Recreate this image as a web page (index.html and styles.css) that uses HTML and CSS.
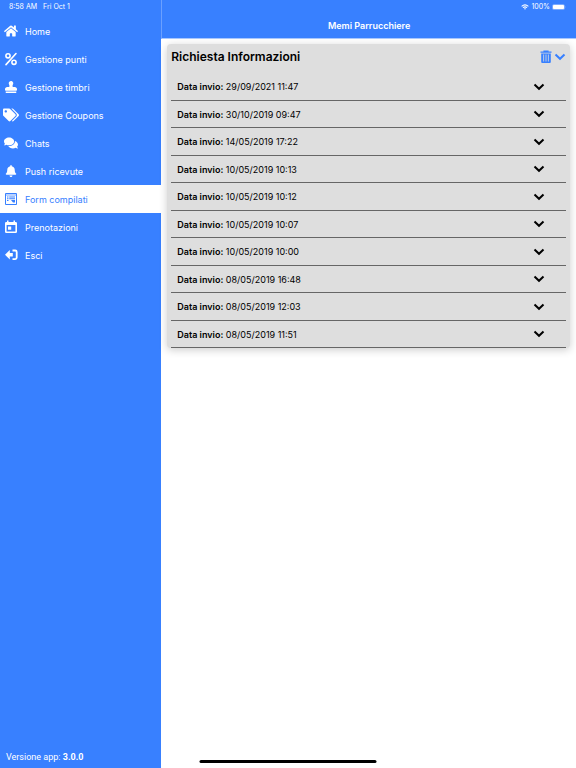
FILE: index.html
```html
<!DOCTYPE html>
<html lang="it">
<head>
<meta charset="utf-8">
<meta name="viewport" content="width=device-width, initial-scale=1">
<title>Memi Parrucchiere</title>
<link rel="stylesheet" href="styles.css">
</head>
<body>
<svg class="defs" aria-hidden="true">
  <symbol id="chevron" viewBox="0 0 12 8"><path d="M1.500 1.500 6 5.800l4.500-4.300" fill="none" stroke="currentColor" stroke-width="2"/></symbol>
</svg>
<div class="app">
  <aside class="sidebar">
    <div class="status"><span>8:58 AM</span><span>Fri Oct 1</span></div>
    <nav class="menu">
      <a class="item" href="#home"><svg class="icon" viewBox="0 0 576 512"><path d="M280.370 148.260L96 300.110V464a16 16 0 0 0 16 16l112.060-.29a16 16 0 0 0 15.920-16V368a16 16 0 0 1 16-16h64a16 16 0 0 1 16 16v95.640a16 16 0 0 0 16 16.050L464 480a16 16 0 0 0 16-16V300L295.670 148.260a12.190 12.190 0 0 0-15.300 0zM571.600 251.470L488 182.560V44.050a12 12 0 0 0-12-12h-56a12 12 0 0 0-12 12v72.610L318.470 43a48 48 0 0 0-61 0L4.340 251.470a12 12 0 0 0-1.600 16.900l25.500 31A12 12 0 0 0 45.150 301l235.220-193.740a12.190 12.190 0 0 1 15.300 0L530.900 301a12 12 0 0 0 16.900-1.600l25.500-31a12 12 0 0 0-1.700-16.930z"/></svg>Home</a>
      <a class="item" href="#punti"><svg class="icon" viewBox="0 0 14 14"><g fill="none" stroke="currentColor" stroke-width="1.600"><circle cx="4" cy="3.800" r="2.100"/><circle cx="10" cy="10.300" r="2.100"/><path d="M12 1.500 2 12.600" stroke-linecap="round"/></g></svg>Gestione punti</a>
      <a class="item" href="#timbri"><svg class="icon small" viewBox="0 0 512 512"><path d="M32 512h448v-64H32v64zm384-256h-66.560c-16.260 0-29.440-13.180-29.440-29.440v-9.460c0-27.370 8.880-53.410 21.460-77.720 9.110-17.610 12.900-38.390 9.050-60.420-6.770-38.780-38.470-70.700-77.260-77.450C212.620-9.040 160 37.330 160 96c0 14.160 3.120 27.540 8.690 39.580C182.020 164.430 192 194.700 192 226.490v.07c0 16.260-13.180 29.440-29.440 29.440H96c-53.020 0-96 42.980-96 96v32c0 17.670 14.330 32 32 32h448c17.670 0 32-14.330 32-32v-32c0-53.020-42.980-96-96-96z"/></svg>Gestione timbri</a>
      <a class="item" href="#coupons"><svg class="icon wide" viewBox="0 0 640 512"><path d="M497.941 225.941L286.059 14.059A48 48 0 0 0 252.118 0H48C21.490 0 0 21.490 0 48v204.118a48 48 0 0 0 14.059 33.941l211.882 211.882c18.744 18.745 49.136 18.746 67.882 0l204.118-204.118c18.745-18.745 18.745-49.137 0-67.882zM112 160c-26.510 0-48-21.490-48-48s21.490-48 48-48 48 21.490 48 48-21.490 48-48 48zm513.941 133.823L421.823 497.941c-18.745 18.745-49.137 18.745-67.882 0l-.36-.36L527.640 323.522c16.999-16.999 26.360-39.600 26.360-63.640s-9.362-46.641-26.360-63.640L331.397 0h48.721a48 48 0 0 1 33.941 14.059l211.882 211.882c18.745 18.745 18.745 49.137 0 67.882z"/></svg>Gestione Coupons</a>
      <a class="item" href="#chats"><svg class="icon" viewBox="0 0 576 512"><path d="M416 192c0-88.400-93.100-160-208-160S0 103.600 0 192c0 34.300 14.100 65.900 38 92-13.400 30.200-35.500 54.200-35.800 54.500-2.200 2.300-2.800 5.700-1.500 8.700S4.800 352 8 352c36.600 0 66.900-12.300 88.700-25 32.200 15.700 70.300 25 111.300 25 114.900 0 208-71.600 208-160zm122 220c23.900-26 38-57.700 38-92 0-66.900-53.500-124.200-129.300-148.100.9 6.600 1.300 13.300 1.300 20.100 0 105.900-107.700 192-240 192-10.800 0-21.300-.8-31.700-1.900C207.800 439.600 281.800 480 368 480c41 0 79.100-9.200 111.300-25 21.800 12.700 52.100 25 88.700 25 3.200 0 6.100-1.900 7.300-4.800 1.300-2.900.7-6.300-1.500-8.700-.3-.3-22.400-24.200-35.800-54.500z"/></svg>Chats</a>
      <a class="item" href="#push"><svg class="icon small" viewBox="0 0 448 512"><path d="M224 512c35.320 0 63.970-28.650 63.970-64H160.030c0 35.350 28.650 64 63.970 64zm215.390-149.710c-19.320-20.760-55.470-51.990-55.470-154.290 0-77.700-54.480-139.900-127.940-155.160V32c0-17.670-14.320-32-31.980-32s-31.980 14.330-31.980 32v20.840C118.560 68.100 64.080 130.300 64.080 208c0 102.300-36.150 133.530-55.470 154.290-6 6.450-8.660 14.160-8.610 21.710.11 16.400 12.980 32 32.100 32h383.800c19.120 0 32-15.600 32.100-32 .05-7.550-2.610-15.270-8.610-21.710z"/></svg>Push ricevute</a>
      <a class="item active" href="#form" aria-current="page"><svg class="icon" viewBox="0 0 14 14"><path d="M1.500 1.500h11v11h-11z" fill="none" stroke="currentColor"/><path d="M2 3h10" fill="none" stroke="currentColor" stroke-width=".7"/><path d="M3 4.500h1.500v1H3zM5.200 4.500H11v1H5.200zM3 6.300h1.500v1H3zM5.200 6.300H11v1H5.200zM3 8.100h1.500v1H3zM7 8.100h4v2.400H9z"/></svg>Form compilati</a>
      <a class="item" href="#prenotazioni"><svg class="icon" viewBox="0 0 14 14"><path fill-rule="evenodd" d="M3 .500h1.500V2h5V.5H11V2h.7q1.300 0 1.300 1.200v8.600q0 1.200-1.300 1.200H2.300Q1 13 1 11.800V3.200Q1 2 2.300 2H3zM2.600 5v6.500h8.800V5zM4 6.500h3.200v3.200H4z"/></svg>Prenotazioni</a>
      <a class="item" href="#esci"><svg class="icon" viewBox="0 0 14 14"><path d="M1 6.800 5.800 2v3h3v3.600h-3v3z"/><path d="M8.500 2.500h2.700q1.500 0 1.500 1.500v5.600q0 1.500-1.500 1.500H8.500" fill="none" stroke="currentColor" stroke-width="1.800"/></svg>Esci</a>
    </nav>
    <p class="version">Versione app: <b>3.0.0</b></p>
  </aside>
  <div class="page">
    <header class="topbar">
      <div class="status right">
        <svg class="wifi" viewBox="0 0 10 7"><path d="M.8 2.700Q5-1 9.200 2.700M2.500 4.400Q5 2.300 7.500 4.400" fill="none" stroke="currentColor" stroke-width="1.300"/><path d="M3.700 5.500Q5 4.600 6.300 5.500L5 6.900z" fill="currentColor"/></svg>
        <span>100%</span>
        <svg class="battery" viewBox="0 0 15 6"><rect x=".3" y=".3" width="12.400" height="5.400" rx="1.500" fill="#8fb6ff"/><rect x="1" y="1" width="11" height="4" rx="1" fill="#fff"/><path d="M13.300 2q1 1 0 2z" fill="#8fb6ff"/></svg>
      </div>
      <h1 class="title">Memi Parrucchiere</h1>
    </header>
    <main class="content">
      <section class="card">
        <div class="card-head">
          <h2 class="card-title">Richiesta Informazioni</h2>
          <button class="tool" type="button" aria-label="Elimina"><svg class="trash" viewBox="0 0 12 14"><path d="M.5 2.200h11M4 2V1h4v1" fill="none" stroke="currentColor" stroke-width="1.200"/><path fill-rule="evenodd" d="M1.200 3.400h9.600V12q0 1-1 1H2.200q-1 0-1-1zM3.300 4.500v7h.8v-7zM5.600 4.500v7h.8v-7zM7.900 4.500v7h.8v-7z"/></svg></button>
          <button class="tool" type="button" aria-label="Comprimi"><svg class="chevron"><use href="#chevron"/></svg></button>
        </div>
        <div class="rows">
          <button class="row" type="button"><span><b>Data invio:</b> 29/09/2021 11:47</span><svg class="chevron"><use href="#chevron"/></svg></button>
          <button class="row" type="button"><span><b>Data invio:</b> 30/10/2019 09:47</span><svg class="chevron"><use href="#chevron"/></svg></button>
          <button class="row" type="button"><span><b>Data invio:</b> 14/05/2019 17:22</span><svg class="chevron"><use href="#chevron"/></svg></button>
          <button class="row" type="button"><span><b>Data invio:</b> 10/05/2019 10:13</span><svg class="chevron"><use href="#chevron"/></svg></button>
          <button class="row" type="button"><span><b>Data invio:</b> 10/05/2019 10:12</span><svg class="chevron"><use href="#chevron"/></svg></button>
          <button class="row" type="button"><span><b>Data invio:</b> 10/05/2019 10:07</span><svg class="chevron"><use href="#chevron"/></svg></button>
          <button class="row" type="button"><span><b>Data invio:</b> 10/05/2019 10:00</span><svg class="chevron"><use href="#chevron"/></svg></button>
          <button class="row" type="button"><span><b>Data invio:</b> 08/05/2019 16:48</span><svg class="chevron"><use href="#chevron"/></svg></button>
          <button class="row" type="button"><span><b>Data invio:</b> 08/05/2019 12:03</span><svg class="chevron"><use href="#chevron"/></svg></button>
          <button class="row" type="button"><span><b>Data invio:</b> 08/05/2019 11:51</span><svg class="chevron"><use href="#chevron"/></svg></button>
        </div>
      </section>
    </main>
  </div>
</div>
<div class="home-indicator"></div>
</body>
</html>
```
FILE: styles.css
```css
* { box-sizing: border-box; }
body {
  margin: 0;
  font-family: Inter, "Liberation Sans", sans-serif;
  background: #fff;
  color: #000;
}
.defs { display: none; }
svg { display: block; fill: currentColor; }
.app { display: flex; min-height: 100vh; }

.sidebar {
  display: flex;
  flex-direction: column;
  width: 28%;
  background: #3880ff;
  color: #fff;
}
.status {
  display: flex;
  align-items: center;
  gap: 6px;
  height: 14px;
  padding: 0 9px;
  font-size: 7px;
  line-height: 14px;
  color: #fff;
}
.status.right { justify-content: flex-end; gap: 2px; }
.wifi { width: 8px; height: 6px; }
.battery { width: 15px; height: 6px; }
.menu { padding-top: 3px; }
.item {
  display: grid;
  grid-template-columns: 16px 1fr;
  align-items: center;
  gap: 6px;
  height: 28px;
  padding-left: 3px;
  font-size: 9px;
  color: #fff;
  text-decoration: none;
}
.item.active { background: #fff; color: #3880ff; }
.icon { width: 14px; height: 14px; justify-self: center; }
.icon.small { width: 12px; height: 12px; }
.icon.wide { width: 16px; }
.version {
  margin: auto 0 0;
  padding: 0 6px 4px;
  font-family: Roboto, "Liberation Sans", sans-serif;
  font-size: 9px;
  line-height: 14px;
}

.page { flex: 1; min-width: 0; }
.topbar {
  height: 39px;
  background: #3880ff;
  color: #fff;
  border-left: 1px solid #6ba0ff;
  border-bottom: 1px solid #a9c8ff;
}
.title {
  margin: 0;
  padding-top: 4px;
  font-size: 9px;
  line-height: 16px;
  font-weight: 600;
  text-align: center;
}
.content { padding: 5px 6px; }
.card {
  padding: 0 4px;
  background: #dedede;
  border-radius: 4px;
  box-shadow: 0 2px 8px rgba(0, 0, 0, .2);
}
.card-head { display: flex; align-items: center; gap: 2px; height: 25px; }
.card-title { flex: 1; margin: 0; font-size: 12px; font-weight: 600; }
button {
  padding: 0;
  border: 0;
  background: none;
  font: inherit;
  color: inherit;
}
.tool { color: #3880ff; }
.trash { width: 12px; height: 14px; }
.chevron { width: 12px; height: 8px; }
.rows { padding-top: 4px; }
.row {
  display: flex;
  align-items: center;
  justify-content: space-between;
  width: 100%;
  height: 28px;
  padding: 0 21px 0 6px;
  border-bottom: 1px solid #666;
  font-size: 9px;
}
.row:nth-child(even) { height: 27px; }
.row b { font-weight: 600; }

.home-indicator {
  position: fixed;
  left: 50%;
  bottom: 5px;
  width: 177px;
  height: 3px;
  border-radius: 2px;
  background: #000;
  transform: translateX(-50%);
}
```
